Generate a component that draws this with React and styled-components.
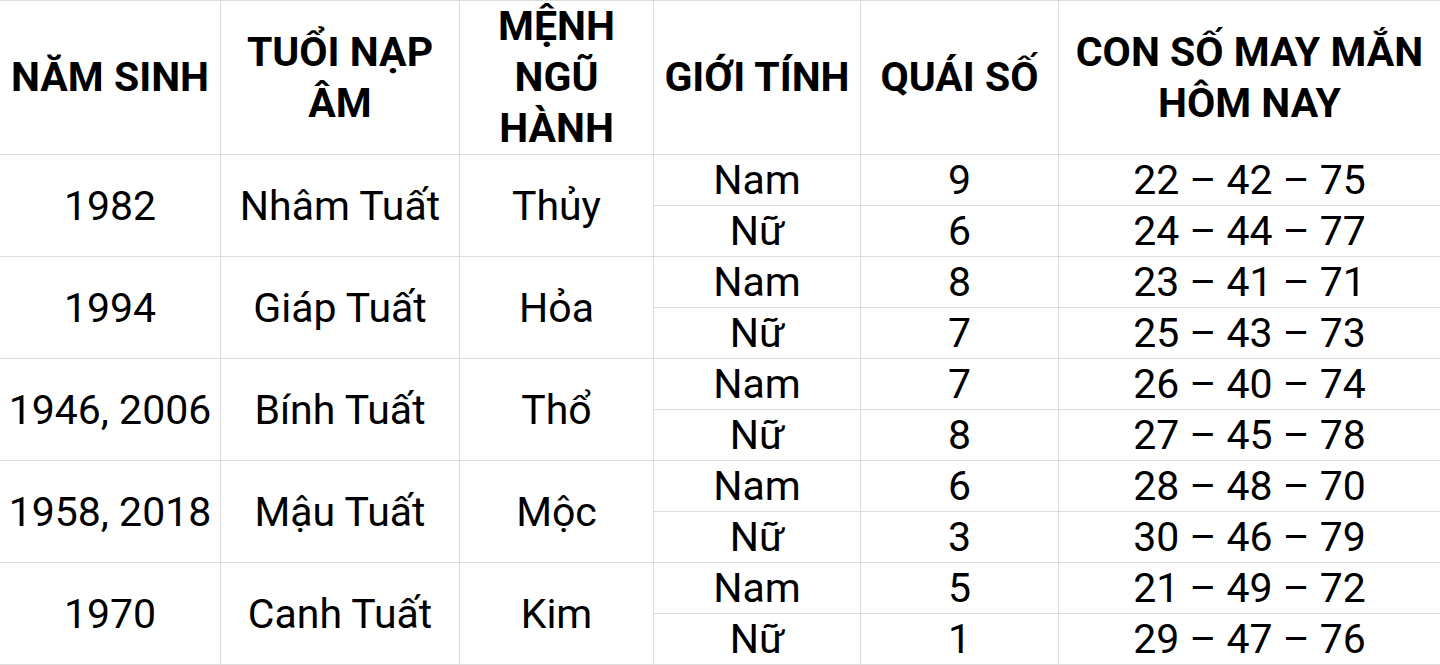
import React from 'react';
import styled, { createGlobalStyle } from 'styled-components';

const GlobalStyle = createGlobalStyle`
	html, body {
		margin: 0;
		padding: 0;
		background: #ffffff;
	}
	body {
		font-family: Roboto, 'Noto Sans', 'Liberation Sans', sans-serif;
		color: #000000;
	}
`;

const Table = styled.div`
	display: grid;
	grid-template-columns: 220px 238px 193px 206px 197px 381px;
	grid-template-rows: 153px repeat(10, 50px);
	gap: 1px;
	padding: 1px 0;
	width: 1440px;
	background: #dddddd;
`;

const HeadCell = styled.div`
	display: flex;
	align-items: center;
	justify-content: center;
	text-align: center;
	background: #ffffff;
	font-size: 41px;
	font-weight: 700;
	line-height: 51px;
	padding: 0 4px;
`;

const Cell = styled.div`
	display: flex;
	align-items: center;
	justify-content: center;
	background: #ffffff;
	font-size: 41px;
	font-weight: 400;
	line-height: 50px;
	white-space: nowrap;
	grid-row: ${(p) => (p.$span ? `span ${p.$span}` : 'auto')};
`;

const headers = [
	'NĂM SINH',
	'TUỔI NẠP ÂM',
	'MỆNH NGŨ HÀNH',
	'GIỚI TÍNH',
	'QUÁI SỐ',
	'CON SỐ MAY MẮN HÔM NAY',
];

const rows = [
	{ year: '1982', name: 'Nhâm Tuất', element: 'Thủy', nam: ['9', '22 – 42 – 75'], nu: ['6', '24 – 44 – 77'] },
	{ year: '1994', name: 'Giáp Tuất', element: 'Hỏa', nam: ['8', '23 – 41 – 71'], nu: ['7', '25 – 43 – 73'] },
	{ year: '1946, 2006', name: 'Bính Tuất', element: 'Thổ', nam: ['7', '26 – 40 – 74'], nu: ['8', '27 – 45 – 78'] },
	{ year: '1958, 2018', name: 'Mậu Tuất', element: 'Mộc', nam: ['6', '28 – 48 – 70'], nu: ['3', '30 – 46 – 79'] },
	{ year: '1970', name: 'Canh Tuất', element: 'Kim', nam: ['5', '21 – 49 – 72'], nu: ['1', '29 – 47 – 76'] },
];

export default function App() {
	return (
		<>
			<GlobalStyle />
			<Table>
				{headers.map((h) => (
					<HeadCell key={h}>{h}</HeadCell>
				))}
				{rows.map((r) => (
					<React.Fragment key={r.year}>
						<Cell $span={2}>{r.year}</Cell>
						<Cell $span={2}>{r.name}</Cell>
						<Cell $span={2}>{r.element}</Cell>
						<Cell>Nam</Cell>
						<Cell>{r.nam[0]}</Cell>
						<Cell>{r.nam[1]}</Cell>
						<Cell>Nữ</Cell>
						<Cell>{r.nu[0]}</Cell>
						<Cell>{r.nu[1]}</Cell>
					</React.Fragment>
				))}
			</Table>
		</>
	);
}
